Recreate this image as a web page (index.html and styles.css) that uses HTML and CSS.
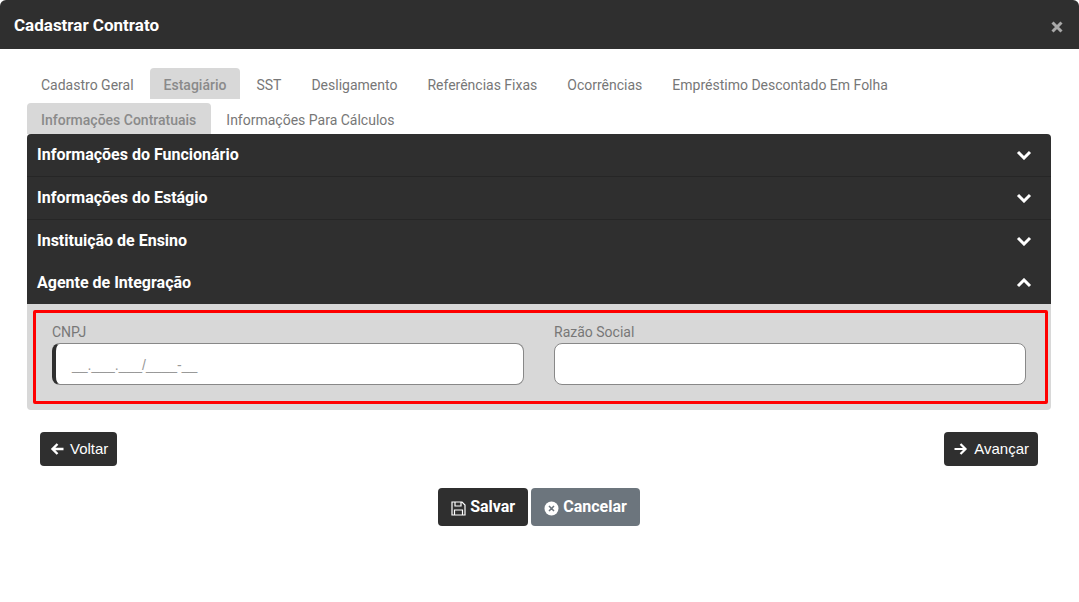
FILE: index.html
```html
<!DOCTYPE html>
<html lang="pt-BR">
<head>
<meta charset="utf-8">
<title>Cadastrar Contrato</title>
<link rel="stylesheet" href="styles.css">
</head>
<body>
<div class="modal">
  <header class="modal-header">
    <h1 class="modal-title">Cadastrar Contrato</h1>
    <svg class="close" width="12" height="12" viewBox="0 0 12 12"><path d="M1.5 1.5l9 9M10.5 1.5l-9 9" stroke="#a9a9a9" stroke-width="3" fill="none"/></svg>
  </header>
  <main class="modal-body">
    <nav class="tabs tabs-main">
      <a class="tab">Cadastro Geral</a>
      <a class="tab active">Estagiário</a>
      <a class="tab">SST</a>
      <a class="tab">Desligamento</a>
      <a class="tab">Referências Fixas</a>
      <a class="tab">Ocorrências</a>
      <a class="tab">Empréstimo Descontado Em Folha</a>
    </nav>
    <nav class="tabs tabs-sub">
      <a class="tab active">Informações Contratuais</a>
      <a class="tab">Informações Para Cálculos</a>
    </nav>
    <section class="accordion">
      <div class="acc-head ruled"><span>Informações do Funcionário</span><svg class="chev" width="16" height="10" viewBox="0 0 16 10"><path d="M2 2l6 6 6-6" stroke="#fff" stroke-width="3" fill="none"/></svg></div>
      <div class="acc-head ruled"><span>Informações do Estágio</span><svg class="chev" width="16" height="10" viewBox="0 0 16 10"><path d="M2 2l6 6 6-6" stroke="#fff" stroke-width="3" fill="none"/></svg></div>
      <div class="acc-head"><span>Instituição de Ensino</span><svg class="chev" width="16" height="10" viewBox="0 0 16 10"><path d="M2 2l6 6 6-6" stroke="#fff" stroke-width="3" fill="none"/></svg></div>
      <div class="acc-head"><span>Agente de Integração</span><svg class="chev" width="16" height="10" viewBox="0 0 16 10"><path d="M2 8l6-6 6 6" stroke="#fff" stroke-width="3" fill="none"/></svg></div>
      <div class="acc-body">
        <div class="highlight">
          <div class="field">
            <label class="label">CNPJ</label>
            <div class="input required">__.___.___/____-__</div>
          </div>
          <div class="field">
            <label class="label">Razão Social</label>
            <div class="input"></div>
          </div>
        </div>
      </div>
    </section>
    <div class="steps">
      <button class="btn btn-step"><svg width="14" height="12" viewBox="0 0 14 12"><path d="M13.500 6H3M7.500 1L2.500 6 7.500 11" stroke="#fff" stroke-width="2.400" fill="none"/></svg>Voltar</button>
      <button class="btn btn-step"><svg width="14" height="12" viewBox="0 0 14 12"><path d="M0.500 6H11M6.500 1L11.500 6 6.500 11" stroke="#fff" stroke-width="2.200" fill="none"/></svg>Avançar</button>
    </div>
    <div class="actions">
      <button class="btn btn-action btn-dark"><svg width="15" height="15" viewBox="0 0 15 15"><path d="M1 1h10l3 3v10H1zM4 1v4h6V1M3.500 14V9h8v5" stroke="#fff" stroke-width="1.200" fill="none"/></svg>Salvar</button>
      <button class="btn btn-action btn-muted"><svg width="15" height="15" viewBox="0 0 15 15"><circle cx="7.500" cy="7.500" r="7" fill="#fff"/><path d="M5 5l5 5M10 5l-5 5" stroke="#6c757d" stroke-width="1.500"/></svg>Cancelar</button>
    </div>
  </main>
</div>
</body>
</html>
```
FILE: styles.css
```css
* { box-sizing: border-box; }
html, body { margin: 0; height: 100%; background: #fff; overflow: hidden; }
body { font-family: Roboto, "Liberation Sans", sans-serif; }
.modal { width: 1079px; }
.modal-header {
  height: 49px; background: #2f2f2f; border-radius: 6px 6px 0 0;
  display: flex; align-items: center; justify-content: space-between;
  padding: 2px 16px 0 14px;
}
.modal-title { margin: 0; font-size: 17px; font-weight: 700; color: #fff; line-height: 1; }
.close { margin-top: 2px; }
.modal-body { padding: 19px 28px 0 27px; }
.tabs { display: flex; font-size: 14px; color: #777; }
.tabs-main { height: 31px; margin-bottom: 4px; }
.tabs-sub { height: 31px; }
.tab { display: block; padding: 0 14px; height: 31px; line-height: 34px; margin-right: 2px; border-radius: 4px 4px 0 0; white-space: nowrap; }
.tab.active { background: #d8d8d8; font-weight: 500; color: #8a8a8a; }
.tabs-sub .tab.active { padding-right: 15px; margin-right: 1px; }
.accordion { border-radius: 4px; overflow: hidden; }
.acc-head {
  height: 42px; background: #2f2f2f; color: #fff; font-size: 16px; font-weight: 700;
  display: flex; align-items: center; justify-content: space-between; padding: 0 19px 1px 10px;
}
.acc-head.ruled { height: 43px; border-bottom: 1px solid #262626; }
.chev { margin-top: 1px; }
.acc-body { background: #d8d8d8; padding: 6px 3px 6px 6px; height: 106px; }
.highlight {
  height: 94px; border: 3px solid #f00; display: grid; grid-template-columns: 472px 472px;
  column-gap: 30px; padding: 11px 0 0 16px; border-radius: 2px;
}
.field { display: flex; flex-direction: column; }
.label { font-size: 14px; color: #777; line-height: 16px; height: 19px; }
.input {
  height: 42px; background: #fff; border: 1px solid #888; border-radius: 8px;
  font-family: "Liberation Sans", Arial, sans-serif; font-size: 14px; color: #999; line-height: 42px; padding-left: 16px;
}
.input.required { border-left: 4px solid #2f2f2f; }
.steps { display: flex; justify-content: space-between; padding: 22px 13px 0; }
.btn { font-family: inherit; border: 0; border-radius: 4px; color: #fff; display: inline-flex; align-items: center; padding: 0; }
.btn-step { height: 34px; background: #2f2f2f; font-family: "Liberation Sans", Arial, sans-serif; font-size: 15px; gap: 6px; padding: 0 9px 1px 10px; }
.btn-step svg { margin-top: 1px; }
.actions { display: flex; justify-content: center; gap: 3px; padding: 22px 0 0 0; }
.btn-action { height: 38px; font-size: 16px; font-weight: 700; gap: 4px; padding: 0 13px 2px; }
.btn-action svg { margin-top: 4px; }
.btn-dark { background: #2f2f2f; }
.btn-muted { background: #6c757d; }
```
